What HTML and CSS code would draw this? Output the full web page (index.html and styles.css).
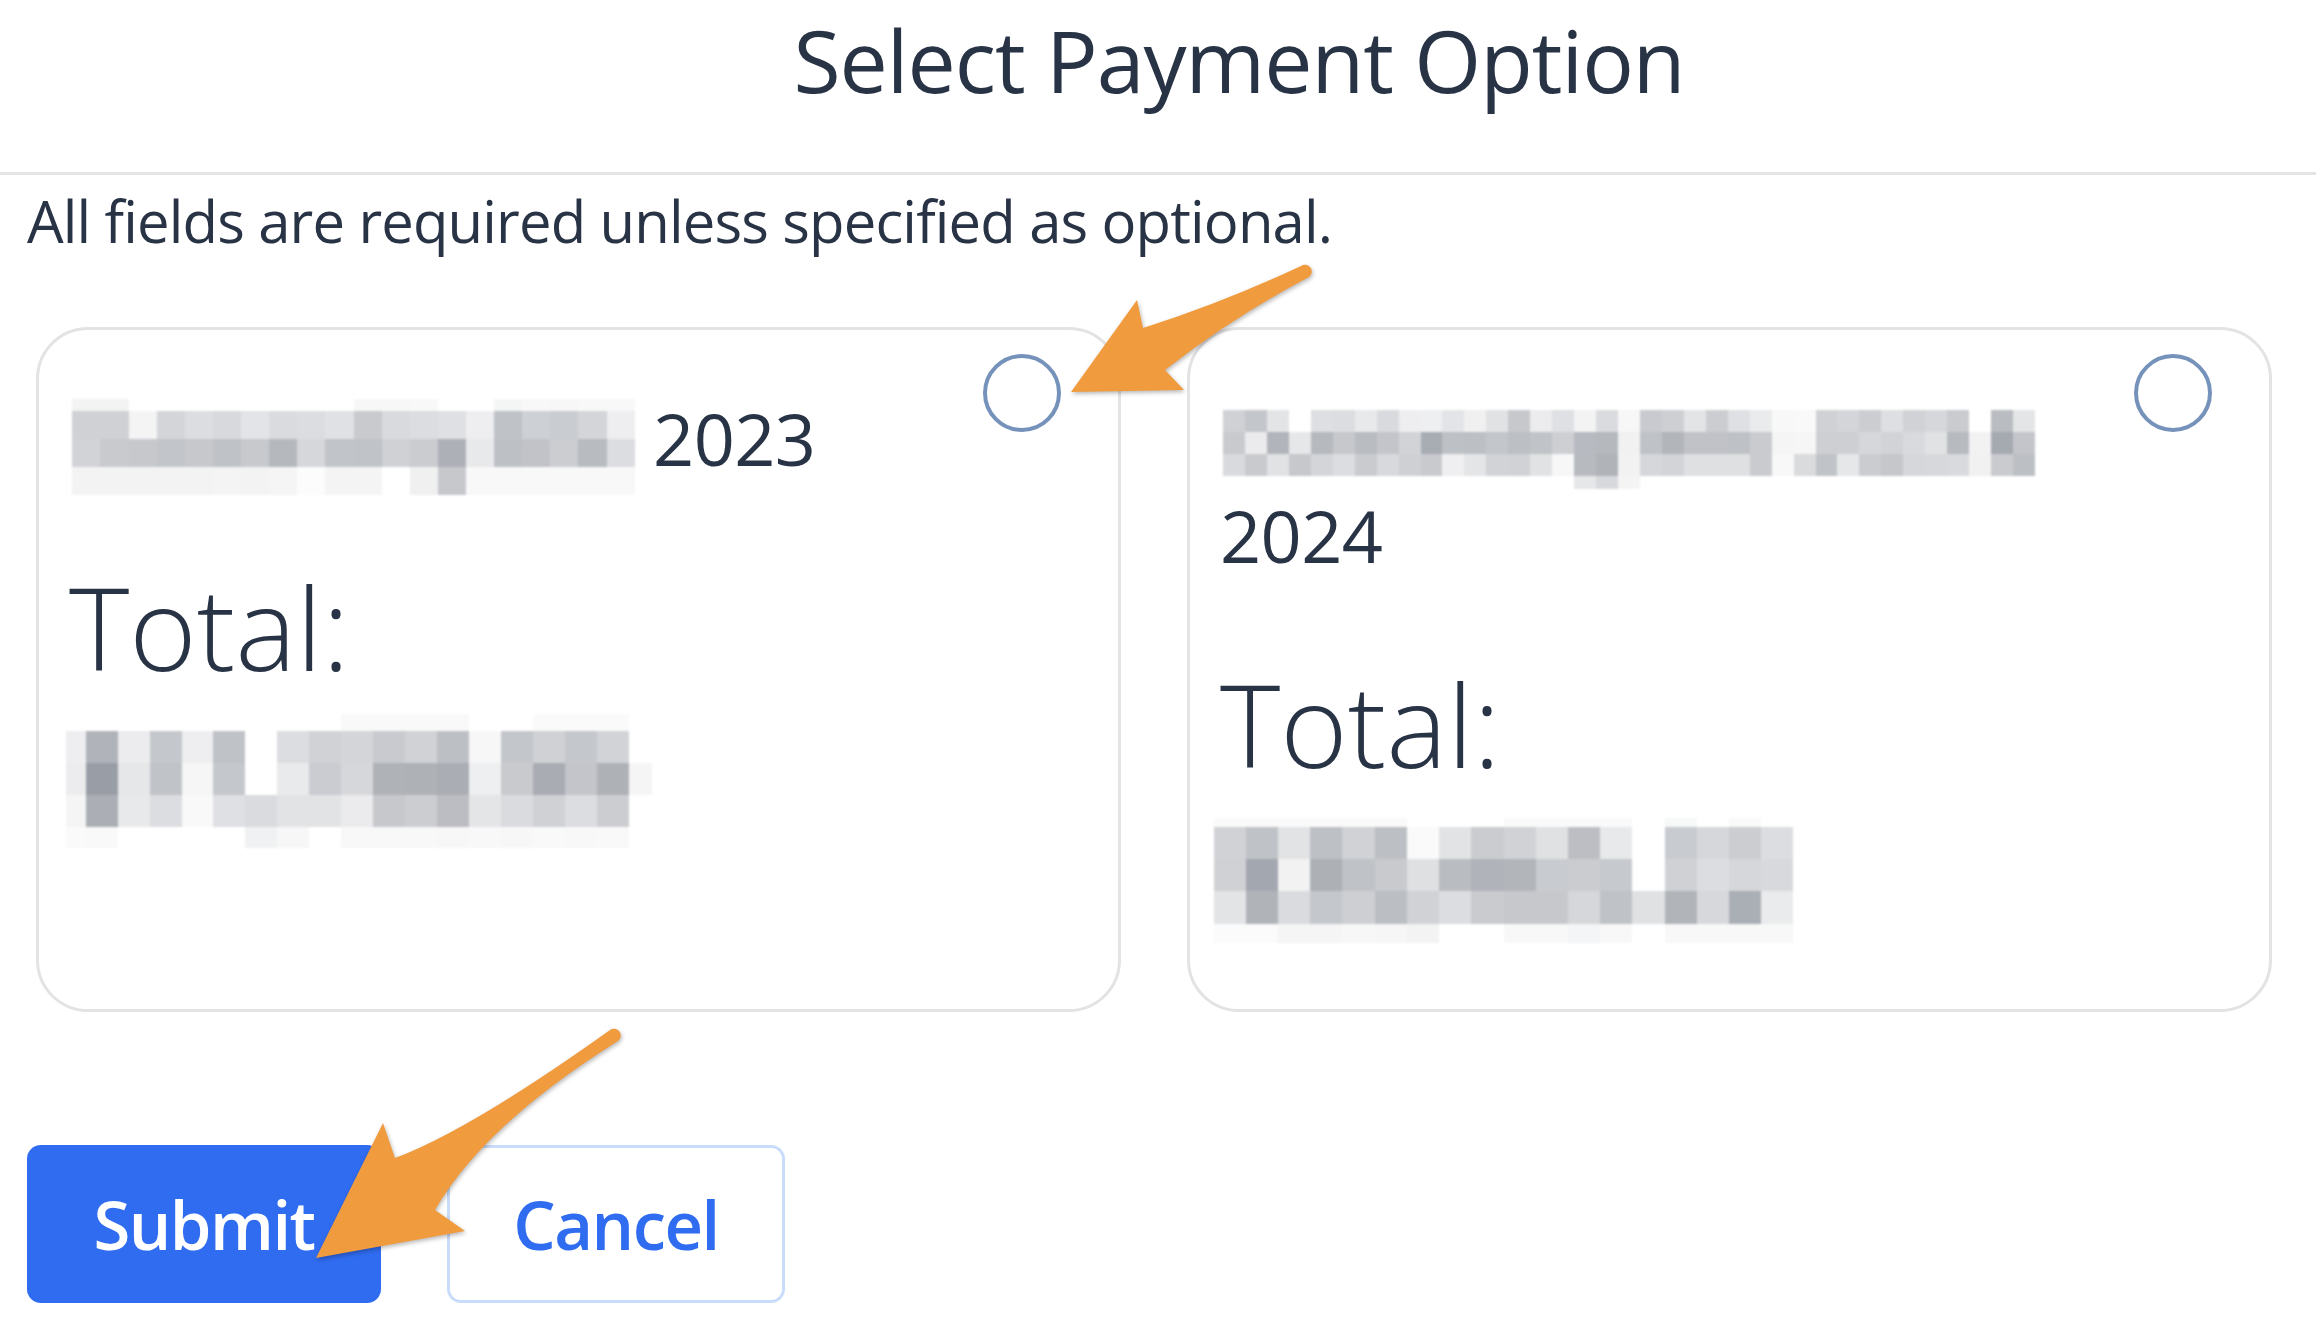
FILE: index.html
```html
<!DOCTYPE html>
<html lang="en">
<head>
<meta charset="utf-8">
<title>Select Payment Option</title>
<link rel="stylesheet" href="styles.css">
</head>
<body>
<div class="page">
  <header class="head"><h1 class="head-title">Select Payment Option</h1></header>
  <p class="note">All fields are required unless specified as optional.</p>

  <div class="options">
    <label class="card">
      <div class="card-top">
        <div class="card-title"><svg class="mosaic m-a" viewBox="0 -0.43 20 3.45" shape-rendering="crispEdges" aria-hidden="true">
          <g transform="translate(0 -1)"><rect x="0" fill="#f3f3f4"/><rect x="1" fill="#f3f3f4"/><rect x="10" fill="#f7f7f8"/><rect x="11" fill="#f7f7f8"/><rect x="12" fill="#f8f8f8"/><rect x="15" fill="#f4f5f5"/><rect x="16" fill="#f8f8f8"/><rect x="17" fill="#f7f7f8"/><rect x="18" fill="#f8f8f8"/><rect x="19" fill="#f8f8f8"/></g>
          <g><rect x="0" fill="#cfd1d5"/><rect x="1" fill="#cfd1d5"/><rect x="2" fill="#f4f4f5"/><rect x="3" fill="#d3d5d9"/><rect x="4" fill="#dcdde0"/><rect x="5" fill="#d8d9dd"/><rect x="6" fill="#e3e4e7"/><rect x="7" fill="#dadbdf"/><rect x="8" fill="#dcdde0"/><rect x="9" fill="#e0e1e4"/><rect x="10" fill="#c8cace"/><rect x="11" fill="#d9dadd"/><rect x="12" fill="#dcdde0"/><rect x="13" fill="#dfe0e3"/><rect x="14" fill="#eeeef0"/><rect x="15" fill="#bfc2c7"/><rect x="16" fill="#cdd0d4"/><rect x="17" fill="#c9ccd0"/><rect x="18" fill="#d3d5d8"/><rect x="19" fill="#eeeef0"/></g>
          <g transform="translate(0 1)"><rect x="0" fill="#d1d3d6"/><rect x="1" fill="#c8cace"/><rect x="2" fill="#c6c8cc"/><rect x="3" fill="#c2c5c9"/><rect x="4" fill="#c6c8cc"/><rect x="5" fill="#bfc2c6"/><rect x="6" fill="#c7c9cd"/><rect x="7" fill="#b5b8bd"/><rect x="8" fill="#d5d7da"/><rect x="9" fill="#c1c4c8"/><rect x="10" fill="#c0c3c7"/><rect x="11" fill="#cfd1d4"/><rect x="12" fill="#caccd0"/><rect x="13" fill="#adb0b6"/><rect x="14" fill="#e8e9eb"/><rect x="15" fill="#bdc0c5"/><rect x="16" fill="#c1c3c8"/><rect x="17" fill="#cbcdd1"/><rect x="18" fill="#b8bbc0"/><rect x="19" fill="#dcdde0"/></g>
          <g transform="translate(0 2)"><rect x="0" fill="#f3f3f4"/><rect x="1" fill="#f3f3f4"/><rect x="2" fill="#f3f3f4"/><rect x="3" fill="#f3f3f4"/><rect x="4" fill="#f3f3f4"/><rect x="5" fill="#f4f4f5"/><rect x="6" fill="#f3f3f4"/><rect x="7" fill="#f5f5f6"/><rect x="8" fill="#fcfcfc"/><rect x="9" fill="#f4f4f5"/><rect x="10" fill="#f4f4f5"/><rect x="12" fill="#f0f0f1"/><rect x="13" fill="#c6c8cc"/><rect x="14" fill="#f8f8f9"/><rect x="15" fill="#f8f8f9"/><rect x="16" fill="#f8f8f9"/><rect x="17" fill="#f8f8f9"/><rect x="18" fill="#f8f8f9"/><rect x="19" fill="#f8f8f9"/></g>
        </svg> 2023</div>
        <span class="radio"></span>
      </div>
      <div class="total">Total:</div>
      <svg class="mosaic m-c" viewBox="-0.6 -0.53 18.3 4.19" shape-rendering="crispEdges" aria-hidden="true">
        <g transform="translate(0 -1)"><rect x="8" fill="#f9f9f9"/><rect x="9" fill="#f9f9f9"/><rect x="10" fill="#f9f9f9"/><rect x="11" fill="#f9f9f9"/><rect x="14" fill="#fafafa"/><rect x="15" fill="#fafafa"/><rect x="16" fill="#fafafa"/></g>
        <g><rect x="-1" fill="#eeeef0"/><rect x="0" fill="#b0b3b9"/><rect x="1" fill="#ececee"/><rect x="2" fill="#c4c7cb"/><rect x="3" fill="#eeeef0"/><rect x="4" fill="#bfc2c6"/><rect x="6" fill="#dcdde0"/><rect x="7" fill="#d0d2d6"/><rect x="8" fill="#d3d5d8"/><rect x="9" fill="#c8cacf"/><rect x="10" fill="#d0d2d5"/><rect x="11" fill="#bcbfc4"/><rect x="12" fill="#f7f7f8"/><rect x="13" fill="#c3c6ca"/><rect x="14" fill="#cfd1d4"/><rect x="15" fill="#c4c7cb"/><rect x="16" fill="#d1d3d6"/></g>
        <g transform="translate(0 1)"><rect x="-1" fill="#ececee"/><rect x="0" fill="#999ea6"/><rect x="1" fill="#e6e7e9"/><rect x="2" fill="#c0c3c7"/><rect x="3" fill="#f6f6f7"/><rect x="4" fill="#c4c7cb"/><rect x="6" fill="#e9eaeb"/><rect x="7" fill="#caccd1"/><rect x="8" fill="#d6d7da"/><rect x="9" fill="#afb2b7"/><rect x="10" fill="#aeb1b6"/><rect x="11" fill="#aaadb4"/><rect x="12" fill="#eeeff0"/><rect x="13" fill="#c8cace"/><rect x="14" fill="#a9acb3"/><rect x="15" fill="#c3c5ca"/><rect x="16" fill="#aeb1b6"/><rect x="17" fill="#f5f5f6"/></g>
        <g transform="translate(0 2)"><rect x="-1" fill="#f5f5f6"/><rect x="0" fill="#abaeb4"/><rect x="1" fill="#e8e9eb"/><rect x="2" fill="#dcdde0"/><rect x="3" fill="#f9f9f9"/><rect x="4" fill="#dfe0e3"/><rect x="5" fill="#dadbde"/><rect x="6" fill="#e2e3e5"/><rect x="7" fill="#e2e3e5"/><rect x="8" fill="#ebebed"/><rect x="9" fill="#c6c8cc"/><rect x="10" fill="#cbcdd1"/><rect x="11" fill="#bcbdc2"/><rect x="12" fill="#e4e5e7"/><rect x="13" fill="#dadbde"/><rect x="14" fill="#cfd1d5"/><rect x="15" fill="#dcdde0"/><rect x="16" fill="#cbcdd1"/></g>
        <g transform="translate(0 3)"><rect x="-1" fill="#fafafa"/><rect x="0" fill="#f9f9f9"/><rect x="5" fill="#f0f1f2"/><rect x="6" fill="#f7f7f8"/><rect x="8" fill="#f8f8f9"/><rect x="9" fill="#f8f8f9"/><rect x="10" fill="#f8f8f9"/><rect x="11" fill="#f7f7f8"/><rect x="12" fill="#f8f8f9"/><rect x="13" fill="#f7f7f8"/><rect x="14" fill="#f9f9f9"/><rect x="15" fill="#f8f8f9"/><rect x="16" fill="#f9f9f9"/></g>
      </svg>
    </label>

    <label class="card">
      <div class="card-top">
        <div class="card-title"><svg class="mosaic m-b" viewBox="0 0 37 3.6" shape-rendering="crispEdges" aria-hidden="true">
          <g><rect x="0" fill="#cfd1d5"/><rect x="1" fill="#c3c6cb"/><rect x="2" fill="#e3e4e6"/><rect x="4" fill="#dedfe2"/><rect x="5" fill="#dcdde0"/><rect x="6" fill="#e8e9eb"/><rect x="7" fill="#d9dadd"/><rect x="8" fill="#eeeef0"/><rect x="9" fill="#eeeff0"/><rect x="10" fill="#e3e4e7"/><rect x="11" fill="#f0f0f1"/><rect x="12" fill="#e1e2e4"/><rect x="13" fill="#c6c8cc"/><rect x="14" fill="#ececee"/><rect x="15" fill="#dfe0e3"/><rect x="16" fill="#f3f3f4"/><rect x="17" fill="#dadbde"/><rect x="18" fill="#f7f7f7"/><rect x="19" fill="#c8cacf"/><rect x="20" fill="#cdcfd3"/><rect x="21" fill="#e3e4e6"/><rect x="22" fill="#cbcdd1"/><rect x="23" fill="#dfe0e3"/><rect x="24" fill="#eaebec"/><rect x="25" fill="#f8f8f8"/><rect x="26" fill="#f9f9f9"/><rect x="27" fill="#cfd1d4"/><rect x="28" fill="#d3d5d8"/><rect x="29" fill="#cbcdd1"/><rect x="30" fill="#dedfe2"/><rect x="31" fill="#d0d2d5"/><rect x="32" fill="#d6d7da"/><rect x="33" fill="#c9cbcf"/><rect x="35" fill="#b9bcc1"/><rect x="36" fill="#e4e5e7"/></g>
          <g transform="translate(0 1)"><rect x="0" fill="#c8cace"/><rect x="1" fill="#ebebed"/><rect x="2" fill="#b1b4ba"/><rect x="3" fill="#e6e7e9"/><rect x="4" fill="#b6b9be"/><rect x="5" fill="#c6c8cc"/><rect x="6" fill="#b9bcc1"/><rect x="7" fill="#c3c5ca"/><rect x="8" fill="#d1d3d6"/><rect x="9" fill="#a8acb3"/><rect x="10" fill="#bdc0c4"/><rect x="11" fill="#bcbfc4"/><rect x="12" fill="#c3c6ca"/><rect x="13" fill="#bcbfc3"/><rect x="14" fill="#c0c3c7"/><rect x="15" fill="#cdcfd3"/><rect x="16" fill="#b7bac0"/><rect x="17" fill="#b5b8bd"/><rect x="18" fill="#f1f1f2"/><rect x="19" fill="#bfc2c6"/><rect x="20" fill="#b2b5ba"/><rect x="21" fill="#c0c2c7"/><rect x="22" fill="#c0c2c7"/><rect x="23" fill="#bec1c5"/><rect x="24" fill="#c9cbcf"/><rect x="25" fill="#f5f5f6"/><rect x="26" fill="#f6f6f7"/><rect x="27" fill="#cdcfd3"/><rect x="28" fill="#cdcfd3"/><rect x="29" fill="#d5d7da"/><rect x="30" fill="#d1d3d6"/><rect x="31" fill="#d9dadd"/><rect x="32" fill="#e1e2e4"/><rect x="33" fill="#b7babf"/><rect x="34" fill="#f2f2f3"/><rect x="35" fill="#a5a9b0"/><rect x="36" fill="#c3c5ca"/></g>
          <g transform="translate(0 2)"><rect x="0" fill="#d9dadd"/><rect x="1" fill="#c8cace"/><rect x="2" fill="#e1e2e4"/><rect x="3" fill="#c6c8cc"/><rect x="4" fill="#d3d5d8"/><rect x="5" fill="#dcdde0"/><rect x="6" fill="#c9cbcf"/><rect x="7" fill="#d8d9dc"/><rect x="8" fill="#ced0d3"/><rect x="9" fill="#c8cace"/><rect x="10" fill="#efeff1"/><rect x="11" fill="#e4e5e7"/><rect x="12" fill="#d1d3d6"/><rect x="13" fill="#d0d2d5"/><rect x="14" fill="#e1e2e4"/><rect x="15" fill="#f7f7f8"/><rect x="16" fill="#b7babf"/><rect x="17" fill="#b0b3b8"/><rect x="18" fill="#f2f2f3"/><rect x="19" fill="#d6d7da"/><rect x="20" fill="#d2d4d7"/><rect x="21" fill="#dfe0e2"/><rect x="22" fill="#dfe0e2"/><rect x="23" fill="#dfe0e2"/><rect x="24" fill="#c9cbcf"/><rect x="25" fill="#f8f8f8"/><rect x="26" fill="#dadbdd"/><rect x="27" fill="#c0c3c7"/><rect x="28" fill="#e6e7e9"/><rect x="29" fill="#caccd0"/><rect x="30" fill="#c5c7cb"/><rect x="31" fill="#d5d7da"/><rect x="32" fill="#d7d8db"/><rect x="33" fill="#d9dadd"/><rect x="34" fill="#f1f1f2"/><rect x="35" fill="#c9cbcf"/><rect x="36" fill="#bcbfc3"/></g>
          <g transform="translate(0 3)"><rect x="16" fill="#e6e7e9"/><rect x="17" fill="#d8d9dc"/><rect x="18" fill="#f4f4f5"/></g>
        </svg> 2024</div>
        <span class="radio"></span>
      </div>
      <div class="total">Total:</div>
      <svg class="mosaic m-d" viewBox="0 -0.28 18 3.88" shape-rendering="crispEdges" aria-hidden="true">
        <g transform="translate(0 -1)"><rect x="0" fill="#fafafa"/><rect x="1" fill="#fafafa"/><rect x="2" fill="#fafafa"/><rect x="3" fill="#fafafa"/><rect x="4" fill="#fafafa"/><rect x="5" fill="#f9f9f9"/><rect x="9" fill="#fafafa"/><rect x="10" fill="#fafafa"/><rect x="11" fill="#fafafa"/><rect x="12" fill="#fafafa"/><rect x="14" fill="#f7f8f8"/><rect x="16" fill="#f8f9f8"/></g>
        <g><rect x="0" fill="#d0d2d5"/><rect x="1" fill="#bfc2c6"/><rect x="2" fill="#e2e3e5"/><rect x="3" fill="#bdc0c4"/><rect x="4" fill="#d0d2d5"/><rect x="5" fill="#bcbfc3"/><rect x="6" fill="#fafafa"/><rect x="7" fill="#e2e3e5"/><rect x="8" fill="#caccd0"/><rect x="9" fill="#d0d2d5"/><rect x="10" fill="#e0e1e3"/><rect x="11" fill="#bdbec3"/><rect x="12" fill="#e8e9eb"/><rect x="14" fill="#c8cbcf"/><rect x="15" fill="#d5d7da"/><rect x="16" fill="#cbcdd1"/><rect x="17" fill="#dcdde0"/></g>
        <g transform="translate(0 1)"><rect x="0" fill="#cfd1d4"/><rect x="1" fill="#a3a7af"/><rect x="2" fill="#f2f2f3"/><rect x="3" fill="#adb1b6"/><rect x="4" fill="#bfc2c6"/><rect x="5" fill="#c8cace"/><rect x="6" fill="#dfe0e2"/><rect x="7" fill="#b9bcc1"/><rect x="8" fill="#b0b3b9"/><rect x="9" fill="#b2b5ba"/><rect x="10" fill="#c8cbcf"/><rect x="11" fill="#caccd0"/><rect x="12" fill="#c6c9cd"/><rect x="14" fill="#cfd1d4"/><rect x="15" fill="#dcdde0"/><rect x="16" fill="#d5d7da"/><rect x="17" fill="#d8d9dc"/></g>
        <g transform="translate(0 2)"><rect x="0" fill="#e3e4e6"/><rect x="1" fill="#b0b3b8"/><rect x="2" fill="#dadbde"/><rect x="3" fill="#c4c7cb"/><rect x="4" fill="#cdcfd3"/><rect x="5" fill="#bbbec3"/><rect x="6" fill="#d0d2d5"/><rect x="7" fill="#dcdde0"/><rect x="8" fill="#c9cbcf"/><rect x="9" fill="#c6c8cc"/><rect x="10" fill="#c6c8cc"/><rect x="11" fill="#d6d7da"/><rect x="12" fill="#bfc2c6"/><rect x="13" fill="#e0e1e3"/><rect x="14" fill="#b1b4b9"/><rect x="15" fill="#d7d8db"/><rect x="16" fill="#aaaeb5"/><rect x="17" fill="#eaebec"/></g>
        <g transform="translate(0 3)"><rect x="0" fill="#fbfbfb"/><rect x="1" fill="#fbfbfb"/><rect x="2" fill="#f5f5f6"/><rect x="3" fill="#f5f5f6"/><rect x="4" fill="#f7f7f7"/><rect x="5" fill="#f6f6f6"/><rect x="6" fill="#f3f3f4"/><rect x="9" fill="#f8f8f8"/><rect x="10" fill="#f8f8f8"/><rect x="11" fill="#f4f5f6"/><rect x="12" fill="#f8f8f8"/><rect x="14" fill="#f8f8f8"/><rect x="15" fill="#f8f8f8"/><rect x="16" fill="#f8f8f8"/><rect x="17" fill="#f8f8f8"/></g>
      </svg>
    </label>
  </div>

  <div class="actions">
    <button class="btn btn-primary" type="button">Submit</button>
    <button class="btn btn-secondary" type="button">Cancel</button>
  </div>

  <svg class="annotations" viewBox="0 0 2316 1324" aria-hidden="true">
    <path class="arrow" d="M1071 392 L1137 300 L1143 328 Q1222 303 1301 266 A6 6 0 0 1 1309 277 Q1233 317 1165 370 L1184 390 Z"/>
    <path class="arrow" d="M316 1258 L383 1123 L395 1158 Q470 1130 610 1030 A6 6 0 0 1 618 1041 Q484 1125 435 1210 L465 1231 Z"/>
  </svg>
</div>
</body>
</html>
```

FILE: styles.css
```css
* {
  box-sizing: border-box;
}

html, body {
  margin: 0;
  padding: 0;
  background: #ffffff;
}

body {
  font-family: "Open Sans", "Noto Sans", "Liberation Sans", sans-serif;
  color: #283345;
}

.page {
  position: relative;
  width: 2316px;
  height: 1324px;
  overflow: hidden;
}

.head {
  height: 175px;
  padding: 1px 0 0 162px;
  border-bottom: 3px solid #e4e4e6;
  text-align: center;
}

.head-title {
  margin: 0;
  font-size: 86px;
  font-weight: 400;
  line-height: 118px;
  letter-spacing: -1px;
  color: #283345;
}

.note {
  margin: 6px 0 0 27px;
  font-size: 58px;
  line-height: 79px;
  letter-spacing: -0.85px;
}

.options {
  display: grid;
  grid-template-columns: 1fr 1fr;
  column-gap: 66px;
  margin: 67px 44px 0 36px;
}

.card {
  display: block;
  border: 3px solid #e3e3e5;
  border-radius: 52px;
  padding: 24px 57px 66px 30px;
  background: #ffffff;
}

.card-top {
  display: flex;
  align-items: flex-start;
  gap: 20px;
}

.card-title {
  flex: 1;
  padding-top: 36px;
  font-size: 72px;
  line-height: 97px;
  letter-spacing: -0.6px;
}

.radio {
  flex: none;
  width: 78px;
  height: 78px;
  border: 4px solid #7592ba;
  border-radius: 50%;
}

.total {
  margin-top: 71px;
  font-size: 115px;
  font-weight: 300;
  line-height: 138px;
}

.mosaic {
  filter: blur(0.8px);
}

.mosaic rect {
  width: 1px;
  height: 1px;
}

.m-a {
  width: 563px;
  height: 97px;
  margin-left: 3px;
  margin-bottom: -30px;
}

.m-b {
  width: 812px;
  height: 79px;
  margin-left: 3px;
  margin-bottom: -23px;
}

.m-c {
  display: block;
  width: 586px;
  height: 134px;
  margin: 18px 0 0 -3px;
}

.m-d {
  display: block;
  width: 581px;
  height: 125px;
  margin: 25px 0 0 -7px;
}

.actions {
  display: flex;
  gap: 66px;
  margin: 133px 0 0 27px;
}

.btn {
  height: 158px;
  font-family: "Open Sans", "Noto Sans", sans-serif;
  font-size: 67px;
  font-weight: 600;
  letter-spacing: -1.5px;
  border-radius: 14px;
  padding: 0;
  cursor: pointer;
}

.btn-primary {
  width: 354px;
  background: #306cf0;
  color: #ffffff;
  border: none;
}

.btn-secondary {
  width: 338px;
  background: #ffffff;
  color: #306cf0;
  border: 3px solid #cadcfb;
}

.annotations {
  position: absolute;
  top: 0;
  left: 0;
  width: 2316px;
  height: 1324px;
  pointer-events: none;
}

.arrow {
  fill: #f19b3f;
  filter: drop-shadow(1px 2px 2px rgba(0, 0, 0, 0.28));
}
```
